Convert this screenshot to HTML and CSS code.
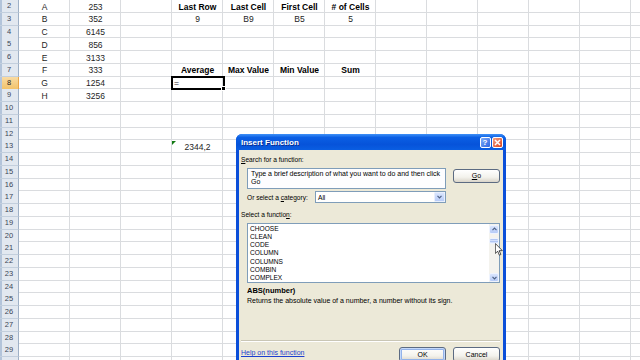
FILE: index.html
```html
<!DOCTYPE html>
<html lang="en">
<head>
    <meta charset="UTF-8">
    <meta name="viewport" content="width=device-width, initial-scale=1.0">
    <title>Insert Function</title>
    <link rel="stylesheet" href="styles.css">
</head>
<body>
    <div class="sheet">
        <div class="row"><div class="rh">2</div><span>A</span><span>253</span><span></span><b>Last Row</b><b>Last Cell</b><b>First Cell</b><b># of Cells</b></div>
        <div class="row"><div class="rh">3</div><span>B</span><span>352</span><span></span><span>9</span><span>B9</span><span>B5</span><span>5</span></div>
        <div class="row"><div class="rh">4</div><span>C</span><span>6145</span></div>
        <div class="row"><div class="rh">5</div><span>D</span><span>856</span></div>
        <div class="row"><div class="rh">6</div><span>E</span><span>3133</span></div>
        <div class="row"><div class="rh">7</div><span>F</span><span>333</span><span></span><b>Average</b><b>Max Value</b><b>Min Value</b><b>Sum</b></div>
        <div class="row current"><div class="rh">8</div><span>G</span><span>1254</span><span></span><span class="cell-sel">=</span></div>
        <div class="row"><div class="rh">9</div><span>H</span><span>3256</span></div>
        <div class="row"><div class="rh">10</div></div>
        <div class="row"><div class="rh">11</div></div>
        <div class="row"><div class="rh">12</div></div>
        <div class="row"><div class="rh">13</div><span></span><span></span><span></span><span class="cell-warn">2344,2</span></div>
        <div class="row"><div class="rh">14</div></div>
        <div class="row"><div class="rh">15</div></div>
        <div class="row"><div class="rh">16</div></div>
        <div class="row"><div class="rh">17</div></div>
        <div class="row"><div class="rh">18</div></div>
        <div class="row"><div class="rh">19</div></div>
        <div class="row"><div class="rh">20</div></div>
        <div class="row"><div class="rh">21</div></div>
        <div class="row"><div class="rh">22</div></div>
        <div class="row"><div class="rh">23</div></div>
        <div class="row"><div class="rh">24</div></div>
        <div class="row"><div class="rh">25</div></div>
        <div class="row"><div class="rh">26</div></div>
        <div class="row"><div class="rh">27</div></div>
        <div class="row"><div class="rh">28</div></div>
        <div class="row"><div class="rh">29</div></div>
        <div class="row"><div class="rh"></div></div>
    </div>

    <div class="dialog">
        <div class="titlebar">
            <span class="title">Insert Function</span>
            <span class="tb-btn help">?</span>
            <span class="tb-btn close">
                <svg width="7" height="7" viewBox="0 0 7 7"><path d="M1 1 L6 6 M6 1 L1 6" stroke="#fff" stroke-width="1.5" fill="none"/></svg>
            </span>
        </div>
        <div class="dlg-body">
            <div class="label first"><u>S</u>earch for a function:</div>
            <div class="search-row">
                <div class="search-box">Type a brief description of what you want to do and then click<br>Go</div>
                <button class="btn go"><u>G</u>o</button>
            </div>
            <div class="cat-row">
                <span class="cat-label">Or select a <u>c</u>ategory:</span>
                <div class="select">
                    <span>All</span>
                    <span class="dd">
                        <svg width="5" height="4" viewBox="0 0 5 4"><path d="M0.5 0.8 L2.5 2.8 L4.5 0.8" stroke="#4d6185" stroke-width="1.2" fill="none"/></svg>
                    </span>
                </div>
            </div>
            <div class="label fn-label">Select a functio<u>n</u>:</div>
            <div class="listbox">
                <ul class="items">
                    <li>CHOOSE</li>
                    <li>CLEAN</li>
                    <li>CODE</li>
                    <li>COLUMN</li>
                    <li>COLUMNS</li>
                    <li>COMBIN</li>
                    <li>COMPLEX</li>
                </ul>
                <div class="vscroll">
                    <span class="sb-btn">
                        <svg width="5" height="4" viewBox="0 0 5 4"><path d="M0.5 3.2 L2.5 1.2 L4.5 3.2" stroke="#4d6185" stroke-width="1.2" fill="none"/></svg>
                    </span>
                    <span class="thumb"></span>
                    <span class="sb-btn down">
                        <svg width="5" height="4" viewBox="0 0 5 4"><path d="M0.5 0.8 L2.5 2.8 L4.5 0.8" stroke="#4d6185" stroke-width="1.2" fill="none"/></svg>
                    </span>
                </div>
            </div>
            <div class="syntax">ABS(number)</div>
            <div class="desc">Returns the absolute value of a number, a number without its sign.</div>
            <div class="sep"></div>
            <div class="footer">
                <a class="help-link">Help on this function</a>
                <button class="btn ok">OK</button>
                <button class="btn">Cancel</button>
            </div>
        </div>
        <svg class="cursor" width="8" height="13" viewBox="0 0 12 19">
            <path d="M0.5 0.5 L0.5 15.5 L4 12 L6.5 18 L8.8 17 L6.3 11.2 L11 11.2 Z" fill="#fff" stroke="#000" stroke-width="1"/>
        </svg>
    </div>
</body>
</html>
```

FILE: styles.css
```css
body {
    margin: 0;
    width: 640px;
    height: 360px;
    overflow: hidden;
    position: relative;
    background: #fff;
    font-family: "Liberation Sans", Arial, sans-serif;
}

/* worksheet */

.sheet {
    height: 360px;
    background-image: linear-gradient(to right, transparent 50px, #dadcdf 50px);
    background-size: 51px 100%;
    background-position: 19px 0;
}

.row {
    display: grid;
    grid-template-columns: 19px repeat(12, 51px);
    height: 12.75px;
    align-items: center;
    background: linear-gradient(to top, #dadcdf 1px, transparent 1px);
}

.row span,
.row b {
    font-size: 8.5px;
    line-height: 12px;
    text-align: center;
    white-space: nowrap;
    color: #1e1e1e;
}

.row b {
    color: #000;
}

.rh {
    align-self: stretch;
    box-sizing: border-box;
    background: #e2e8f0;
    border-right: 1px solid #9eb0c6;
    border-bottom: 1px solid #c3cfdd;
    box-shadow: inset 2px 0 #b3c4da;
    font-size: 7.5px;
    line-height: 12px;
    text-align: center;
    color: #3b4657;
}

.current .rh {
    background: linear-gradient(#f9dba3, #f2c36b);
    border-color: #e9a548;
    color: #222;
}

.row .cell-sel {
    align-self: stretch;
    position: relative;
    margin: -1px -2px -0.5px -1px;
    border: 2px solid #000;
    padding-left: 1px;
    line-height: 10px;
    text-align: left;
}

.cell-sel::after {
    content: "";
    position: absolute;
    right: -3px;
    bottom: -3px;
    width: 3px;
    height: 3px;
    background: #000;
    border: 1px solid #fff;
}

.cell-warn {
    position: relative;
}

.cell-warn::before {
    content: "";
    position: absolute;
    left: 0;
    top: 0;
    border-top: 4px solid #127a12;
    border-right: 4px solid transparent;
}

/* Insert Function dialog */

.dialog {
    position: absolute;
    left: 236px;
    top: 134px;
    width: 270px;
    height: 240px;
    box-sizing: border-box;
    padding: 0 3px 3px;
    background: #0b4fd9;
    border-radius: 6px 6px 0 0;
    display: flex;
    flex-direction: column;
    font-family: "Liberation Sans", Tahoma, sans-serif;
    font-size: 6.6px;
    color: #000;
}

.titlebar {
    margin: 0 -3px;
    height: 16px;
    display: flex;
    align-items: center;
    padding: 0 3.5px 0 5px;
    background: linear-gradient(#3f91f7 0%, #0b5fe4 22%, #0653da 65%, #0a5ee2 100%);
    border-radius: 6px 6px 0 0;
}

.title {
    flex: 1;
    color: #fff;
    font-weight: bold;
    font-size: 8px;
    text-shadow: 1px 1px #0a2d92;
}

.tb-btn {
    width: 11px;
    height: 11px;
    box-sizing: border-box;
    margin-left: 1px;
    border: 1px solid #fff;
    border-radius: 2px;
    display: flex;
    align-items: center;
    justify-content: center;
}

.help {
    background: linear-gradient(135deg, #7eabf8, #2d66e2);
    color: #fff;
    font-weight: bold;
    font-size: 8px;
}

.close {
    background: linear-gradient(135deg, #f3a083, #d9441f);
}

.dlg-body {
    flex: 1;
    background: #ece9d8;
    padding: 0 3px 0 2px;
    display: flex;
    flex-direction: column;
}

.label {
    line-height: 9px;
}

.label.first {
    margin-top: 4.5px;
}

.search-row {
    display: flex;
    margin: 4px 0 0 6px;
}

.search-box {
    width: 199px;
    height: 21px;
    box-sizing: border-box;
    padding: 1.5px 3px 0;
    border: 1px solid #7f9db9;
    background: #fdfdff;
    font-size: 7px;
    line-height: 8px;
    white-space: nowrap;
}

.btn {
    width: 47px;
    height: 15px;
    box-sizing: border-box;
    padding: 0;
    border: 1px solid #5c6b82;
    border-radius: 3px;
    background: linear-gradient(#fff, #f3f2ec 60%, #d9d4c9);
    font: inherit;
    font-size: 7px;
    color: #000;
}

.go {
    height: 14px;
    margin: 1px 0 0 7px;
}

.ok {
    box-shadow: inset 0 0 0 1px #c4d9fb, inset 0 0 0 2px #93b3ea;
}

.cat-row {
    display: flex;
    align-items: center;
    height: 12px;
    margin: 2.5px 0 0 6px;
}

.cat-label {
    width: 68px;
}

.select {
    width: 131px;
    height: 12px;
    box-sizing: border-box;
    padding-left: 2px;
    border: 1px solid #7f9db9;
    background: #fff;
    display: flex;
    align-items: center;
    justify-content: space-between;
}

.dd {
    width: 11px;
    height: 10px;
    box-sizing: border-box;
    border: 1px solid #e8effd;
    border-radius: 1px;
    background: linear-gradient(#d9e5fd, #b8ccf8);
    display: flex;
    align-items: center;
    justify-content: center;
}

.fn-label {
    margin-top: 6.5px;
}

.listbox {
    height: 60.5px;
    box-sizing: border-box;
    margin: 4px 0 0 6px;
    border: 1px solid #7f9db9;
    background: #fff;
    display: flex;
}

.items {
    flex: 1;
    margin: 0;
    padding: 1px 0 0 2px;
    list-style: none;
    line-height: 8.25px;
    overflow: hidden;
}

.vscroll {
    width: 10px;
    background: #f4f3ee;
    display: flex;
    flex-direction: column;
}

.sb-btn {
    height: 9px;
    box-sizing: border-box;
    margin-top: 1px;
    border: 1px solid #eef3fe;
    border-radius: 2px;
    background: linear-gradient(#d8e4fd, #b6cbf7);
    display: flex;
    align-items: center;
    justify-content: center;
}

.sb-btn.down {
    margin-top: auto;
}

.thumb {
    height: 6px;
    margin-top: 4.5px;
    border: 1px solid #eef3fe;
    border-radius: 2px;
    box-sizing: border-box;
    background: repeating-linear-gradient(#b1c6f3 0 1px, #d3e0fc 1px 2px);
}

.syntax {
    margin: 2.5px 0 0 6px;
    font-weight: bold;
    font-size: 7.5px;
    line-height: 9px;
}

.desc {
    margin: 1.7px 0 0 6px;
    font-size: 7px;
    line-height: 9px;
}

.sep {
    margin-top: 34.8px;
    border-top: 1px solid #c9c6b5;
    border-bottom: 1px solid #fff;
}

.footer {
    display: flex;
    align-items: flex-start;
    gap: 7px;
    margin-top: 5.5px;
}

.help-link {
    margin: 0.7px auto 0 0;
    font-size: 7px;
    line-height: 9px;
    color: #1c3fcf;
    text-decoration: underline;
}

.cursor {
    position: absolute;
    left: 259px;
    top: 109px;
}
```
